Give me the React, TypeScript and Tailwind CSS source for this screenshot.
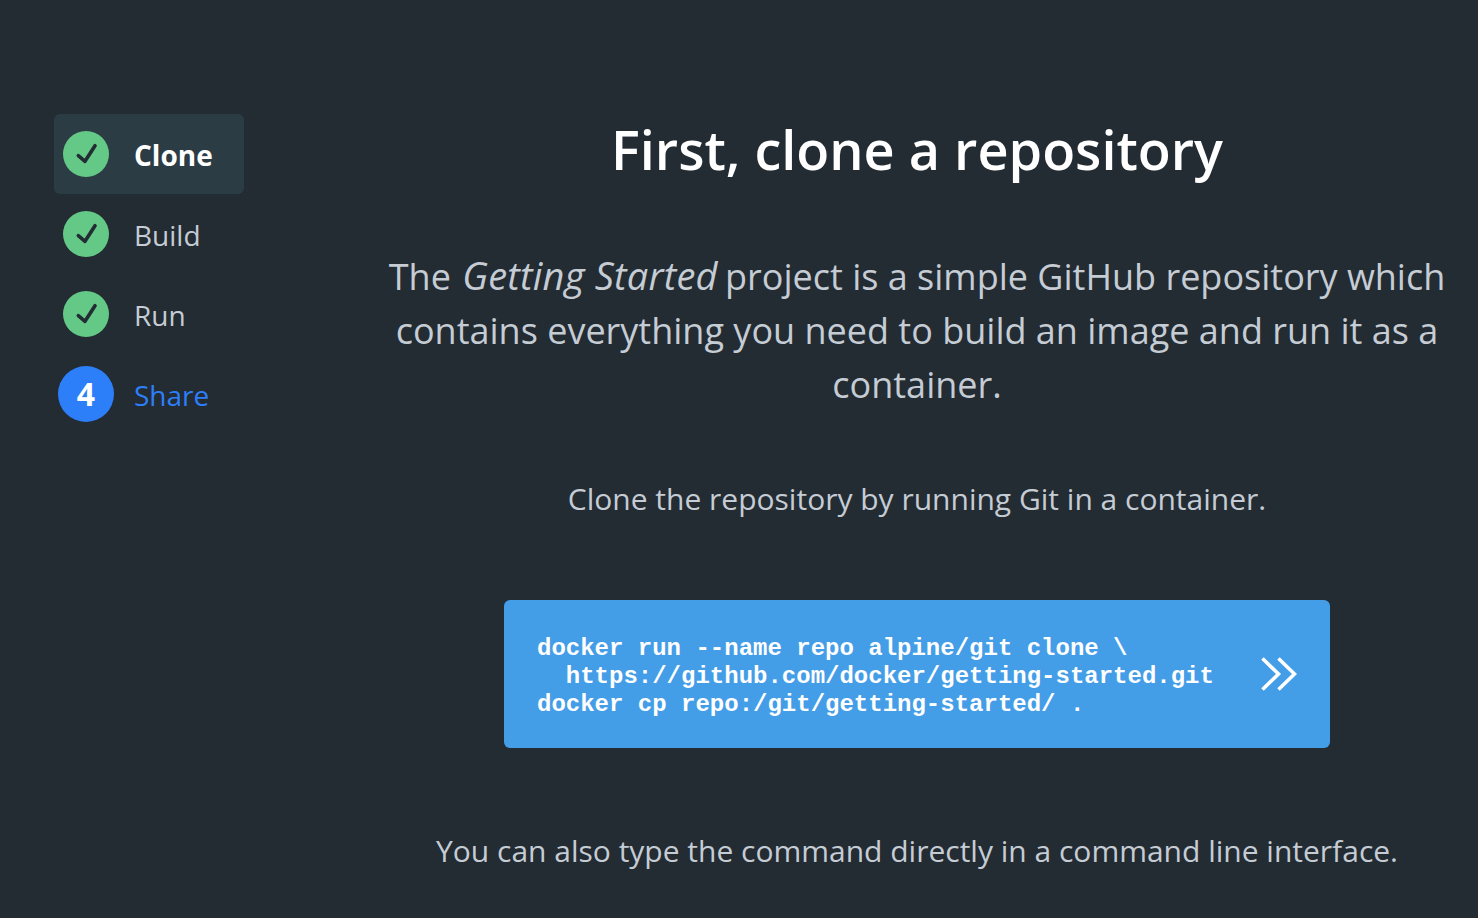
import React from "react";

const Check = () => (
  <span className="flex h-[46px] w-[46px] items-center justify-center rounded-full bg-[#64c987]">
    <svg width="24" height="24" viewBox="0 0 24 24" fill="none" stroke="#232b33" strokeWidth="3.6" strokeLinecap="round" strokeLinejoin="round">
      <path d="M4.3 13.7 L11 19.3 L21 3.7" />
    </svg>
  </span>
);

const Step = ({ label, active }: { label: string; active?: boolean }) => (
  <div className={`flex h-20 w-[190px] items-center rounded-md pl-[9px] ${active ? "bg-[#2c3c45]" : ""}`}>
    <Check />
    <span className={`ml-[25px] pt-0.5 text-[28px] ${active ? "font-bold text-white" : "text-[#c5ccd4]"}`}>{label}</span>
  </div>
);

export default function App() {
  return (
    <div className="flex h-[918px] w-[1478px] overflow-hidden bg-[#232b33] font-['Open_Sans',sans-serif]">
      <div className="ml-[54px] mt-[114px] flex w-[190px] flex-col">
        <Step label="Clone" active />
        <Step label="Build" />
        <Step label="Run" />
        <div className="flex h-20 items-center pl-1">
          <span className="flex h-14 w-14 items-center justify-center rounded-full bg-[#2d7ff9] text-[32px] font-bold text-white">4</span>
          <span className="ml-5 pt-0.5 text-[28px] text-[#2d7ff9]">Share</span>
        </div>
      </div>
      <div className="ml-[141px] flex w-[1064px] flex-col items-center text-center">
        <h1 className="mt-[113px] text-[54px] leading-[72px] font-semibold text-white">First, clone a repository</h1>
        <p className="mt-[65px] text-[36px] leading-[54px] text-[#c5ccd4]">
          The <em className="ml-[2px] mr-[-2px] text-[38px] leading-none tracking-[0.2px]">Getting Started</em> project is a simple GitHub repository which contains everything you need to build an image and run it as a container.
        </p>
        <p className="mt-[65px] text-[30px] leading-[44px] text-[#c5ccd4]">Clone the repository by running Git in a container.</p>
        <div className="mt-[79px] flex h-[148px] w-[826px] items-center justify-between rounded-md bg-[#449de7] pl-[33px] pr-[33px]">
          <pre className="pt-1.5 text-left font-['Liberation_Mono',monospace] text-[24px] leading-[28px] font-bold text-white">{`docker run --name repo alpine/git clone \\
  https://github.com/docker/getting-started.git
docker cp repo:/git/getting-started/ .`}</pre>
          <svg width="37" height="36" viewBox="0 0 37 36" fill="none" stroke="white" strokeWidth="3.6">
            <path d="M2.5 2.5 L18.5 18 L2.5 33.5" />
            <path d="M18.5 2.5 L34.5 18 L18.5 33.5" />
          </svg>
        </div>
        <p className="mt-[81px] text-[30px] leading-[44px] text-[#c5ccd4]">You can also type the command directly in a command line interface.</p>
      </div>
    </div>
  );
}
